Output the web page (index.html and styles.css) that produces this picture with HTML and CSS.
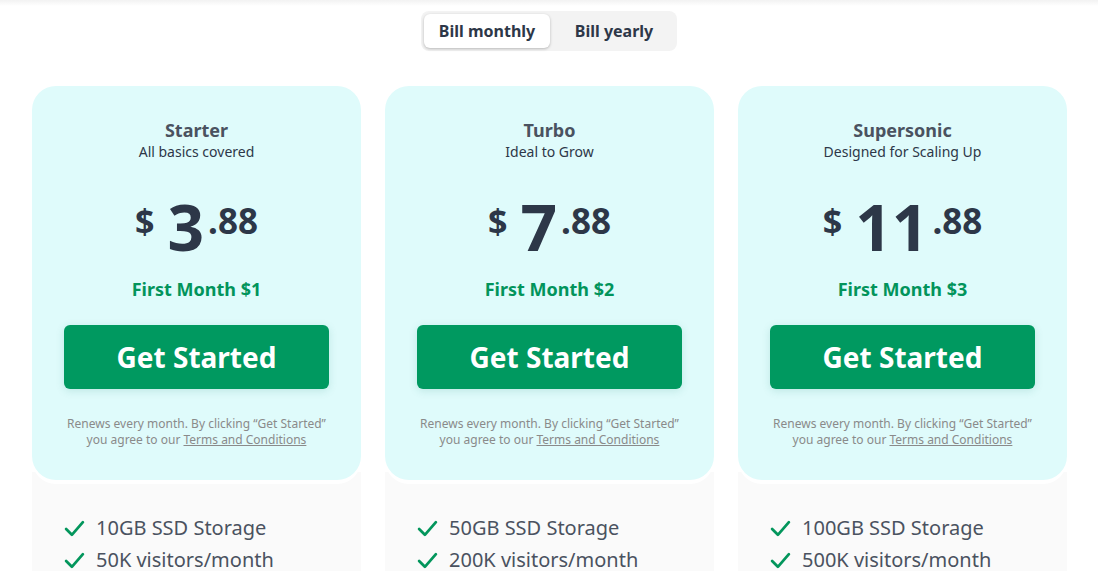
FILE: index.html
```html
<!DOCTYPE html>
<html lang="en">
<head>
<meta charset="utf-8">
<title>Pricing</title>
<link rel="stylesheet" href="styles.css">
</head>
<body>
<div class="topshade"></div>
<div class="toggle-wrap">
  <div class="toggle">
    <button class="toggle-btn active">Bill monthly</button>
    <button class="toggle-btn">Bill yearly</button>
  </div>
</div>
<div class="plans">
  <div class="plan">
    <div class="card">
      <div class="name">Starter</div>
      <div class="tagline">All basics covered</div>
      <div class="price"><span class="cur">$</span><span class="whole">3</span><span class="cents">.88</span></div>
      <div class="promo">First Month $1</div>
      <a class="cta" href="#">Get Started</a>
      <p class="terms">Renews every month. By clicking “Get Started”<br>you agree to our <a href="#">Terms and Conditions</a></p>
    </div>
    <ul class="features">
      <li><svg class="check" viewBox="0 0 20 20"><path d="M2 10.5 L7.5 16 L18 4"/></svg>10GB SSD Storage</li>
      <li><svg class="check" viewBox="0 0 20 20"><path d="M2 10.5 L7.5 16 L18 4"/></svg>50K visitors/month</li>
    </ul>
  </div>
  <div class="plan">
    <div class="card">
      <div class="name">Turbo</div>
      <div class="tagline">Ideal to Grow</div>
      <div class="price"><span class="cur">$</span><span class="whole">7</span><span class="cents">.88</span></div>
      <div class="promo">First Month $2</div>
      <a class="cta" href="#">Get Started</a>
      <p class="terms">Renews every month. By clicking “Get Started”<br>you agree to our <a href="#">Terms and Conditions</a></p>
    </div>
    <ul class="features">
      <li><svg class="check" viewBox="0 0 20 20"><path d="M2 10.5 L7.5 16 L18 4"/></svg>50GB SSD Storage</li>
      <li><svg class="check" viewBox="0 0 20 20"><path d="M2 10.5 L7.5 16 L18 4"/></svg>200K visitors/month</li>
    </ul>
  </div>
  <div class="plan">
    <div class="card">
      <div class="name">Supersonic</div>
      <div class="tagline">Designed for Scaling Up</div>
      <div class="price"><span class="cur">$</span><span class="whole">11</span><span class="cents">.88</span></div>
      <div class="promo">First Month $3</div>
      <a class="cta" href="#">Get Started</a>
      <p class="terms">Renews every month. By clicking “Get Started”<br>you agree to our <a href="#">Terms and Conditions</a></p>
    </div>
    <ul class="features">
      <li><svg class="check" viewBox="0 0 20 20"><path d="M2 10.5 L7.5 16 L18 4"/></svg>100GB SSD Storage</li>
      <li><svg class="check" viewBox="0 0 20 20"><path d="M2 10.5 L7.5 16 L18 4"/></svg>500K visitors/month</li>
    </ul>
  </div>
</div>
</body>
</html>
```
FILE: styles.css
```css
* { box-sizing: border-box; }
html, body { margin: 0; padding: 0; background: #fff; }
body {
  font-family: "Noto Sans", "Open Sans", sans-serif;
  color: #2d3748;
  overflow: hidden;
}
.topshade {
  height: 6px;
  background: linear-gradient(#f2f2f2, #ffffff);
}
.toggle-wrap {
  display: flex;
  justify-content: center;
  padding-top: 5px;
}
.toggle {
  display: flex;
  background: #f3f3f3;
  border-radius: 8px;
  padding: 3px;
  width: 256px;
}
.toggle-btn {
  font-family: inherit;
  border: 0;
  background: transparent;
  font-size: 16px;
  font-weight: 700;
  color: #2d3748;
  height: 34px;
  padding: 0;
  white-space: nowrap;
  border-radius: 6px;
  cursor: pointer;
}
.toggle-btn.active {
  background: #fff;
  width: 126px;
  flex: none;
  box-shadow: 0 1px 3px rgba(0,0,0,0.25);
}
.toggle-btn:not(.active) { flex: 1; padding-left: 4px; }
.plans {
  display: flex;
  gap: 24px;
  padding: 35px 31px 0 32px;
}
.plan {
  width: 329px;
  display: flex;
  flex-direction: column;
}
.card {
  position: relative;
  z-index: 1;
  background: #dffbfb;
  border-radius: 24px;
  box-shadow: 0 4px 0 0 #fff;
  text-align: center;
  padding: 33px 32px 0;
  height: 394px;
}
.name {
  font-size: 18px;
  font-weight: 700;
  color: #4a5260;
  line-height: 22px;
}
.tagline {
  font-size: 14px;
  line-height: 20px;
  color: #2d3748;
  margin-top: 1px;
}
.price {
  margin-top: 30px;
  display: flex;
  justify-content: center;
  align-items: flex-start;
  color: #2d3748;
  font-weight: 700;
  height: 70px;
}
.cur { font-size: 34px; line-height: 40px; margin-top: 9px; margin-right: 13px; }
.whole { font-size: 64px; line-height: 70px; }
.cents { font-size: 35px; line-height: 40px; margin-top: 9px; margin-left: 4px; }
.promo {
  margin-top: 15px;
  font-size: 18px;
  font-weight: 700;
  color: #02945b;
  line-height: 24px;
}
.cta {
  display: block;
  margin-top: 24px;
  height: 64px;
  line-height: 64px;
  background: #009960;
  color: #fff;
  font-size: 28px;
  font-weight: 700;
  text-decoration: none;
  border-radius: 6px;
  box-shadow: 0 2px 8px rgba(0,120,100,0.15);
}
.terms {
  margin: 27px 0 0;
  font-size: 12px;
  line-height: 16px;
  color: #8a8a8a;
}
.terms a { color: #8a8a8a; text-decoration: underline; }
.features {
  list-style: none;
  margin: -8px 0 0;
  padding: 40px 32px 20px;
  background: #fafafa;
}
.features li {
  display: flex;
  align-items: center;
  font-size: 20px;
  line-height: 32px;
  color: #4a5260;
}
.check {
  width: 21px;
  height: 21px;
  margin-right: 11px;
  fill: none;
  stroke: #03965c;
  stroke-width: 2.6;
  stroke-linecap: round;
  stroke-linejoin: round;
}
```
